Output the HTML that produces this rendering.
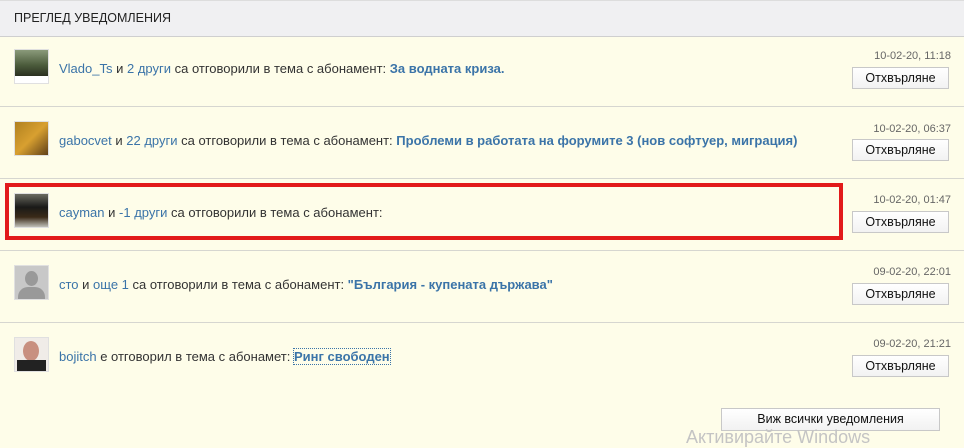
<!DOCTYPE html>
<html><head><meta charset="utf-8"><style>
body{margin:0;width:964px;height:447px;overflow:hidden;background:#fefde9;font-family:"Liberation Sans",Arial,sans-serif;font-size:13px;color:#333;position:relative}
.hdr{position:absolute;left:0;top:0;width:964px;height:35px;background:#f0f0f2;border-top:1px solid #ddd;border-bottom:1px solid #cfcfcf}
.hdr span{position:absolute;left:14px;top:10px;font-size:12.5px;color:#222}
.row{position:absolute;left:0;width:964px;height:71px;border-bottom:1px solid #d6d6d0}
.av{position:absolute;left:14px;width:33px;height:33px;border:1px solid #e0e0e0;background:#fff}
.txt{position:absolute;left:59px;white-space:nowrap}
a{color:#3b74a8;text-decoration:none}
b a{font-weight:bold}
.date{position:absolute;right:13px;font-size:11px;color:#666}
.btn{position:absolute;left:852px;width:97px;height:22px;border:1px solid #c8c8c8;background:linear-gradient(#fff,#f2f2f2);font-size:12.5px;color:#111;text-align:center;line-height:21px;box-sizing:border-box}
.red{position:absolute;left:5px;top:183px;width:838px;height:57px;border:4px solid #e21a1a;box-sizing:border-box}
</style></head><body>
<div class="hdr"><span>ПРЕГЛЕД УВЕДОМЛЕНИЯ</span></div>

<div class="row" style="top:35px">
<div class="av" style="top:14px"><div style="height:26px;background:linear-gradient(#8a9a7a,#4a5a3a 60%,#2a3020)"></div></div>
<div class="txt" style="top:26px"><a>Vlado_Ts</a> и <a>2 други</a> са отговорили в тема с абонамент: <b><a>За водната криза.</a></b></div>
<div class="date" style="top:15px">10-02-20, 11:18</div>
<div class="btn" style="top:32px">Отхвърляне</div>
</div>

<div class="row" style="top:107px">
<div class="av" style="top:14px"><div style="height:33px;background:linear-gradient(135deg,#b08020,#d8a030 50%,#604018)"></div></div>
<div class="txt" style="top:26px"><a>gabocvet</a> и <a>22 други</a> са отговорили в тема с абонамент: <b><a>Проблеми в работата на форумите 3 (нов софтуер, миграция)</a></b></div>
<div class="date" style="top:16px">10-02-20, 06:37</div>
<div class="btn" style="top:32px">Отхвърляне</div>
</div>

<div class="row" style="top:179px">
<div class="av" style="top:14px"><div style="height:33px;background:linear-gradient(#6a6a60,#1a1a18 40%,#3a2a18 70%,#c0c0b8)"></div></div>
<div class="txt" style="top:26px"><a>cayman</a> и <a>-1 други</a> са отговорили в тема с абонамент:</div>
<div class="date" style="top:15px">10-02-20, 01:47</div>
<div class="btn" style="top:32px">Отхвърляне</div>
</div>

<div class="row" style="top:251px">
<div class="av" style="top:14px;background:#c8c8c8;overflow:hidden"><div style="position:absolute;left:10px;top:5px;width:13px;height:15px;border-radius:50%;background:#999"></div><div style="position:absolute;left:3px;top:21px;width:27px;height:20px;border-radius:10px 10px 0 0;background:#999"></div></div>
<div class="txt" style="top:26px"><a>сто</a> и <a>още 1</a> са отговорили в тема с абонамент: <b><a>"България - купената държава"</a></b></div>
<div class="date" style="top:15px">09-02-20, 22:01</div>
<div class="btn" style="top:32px">Отхвърляне</div>
</div>

<div class="row" style="top:323px;border-bottom:none">
<div class="av" style="top:14px;background:#f0ece8;overflow:hidden"><div style="position:absolute;left:8px;top:3px;width:16px;height:20px;border-radius:50%;background:#c89080"></div><div style="position:absolute;left:2px;top:22px;width:29px;height:12px;background:#222"></div></div>
<div class="txt" style="top:26px"><a>bojitch</a> е отговорил в тема с абонамет: <b><a style="outline:1px dotted #3b74a8">Ринг свободен</a></b></div>
<div class="date" style="top:15px">09-02-20, 21:21</div>
<div class="btn" style="top:32px">Отхвърляне</div>
</div>

<div class="red"></div>
<div class="btn" style="left:721px;top:408px;width:219px;height:23px">Виж всички уведомления</div>
<div style="position:absolute;left:686px;top:427px;font-size:18px;color:#c4c4c4">Активирайте Windows</div>
</body></html>
